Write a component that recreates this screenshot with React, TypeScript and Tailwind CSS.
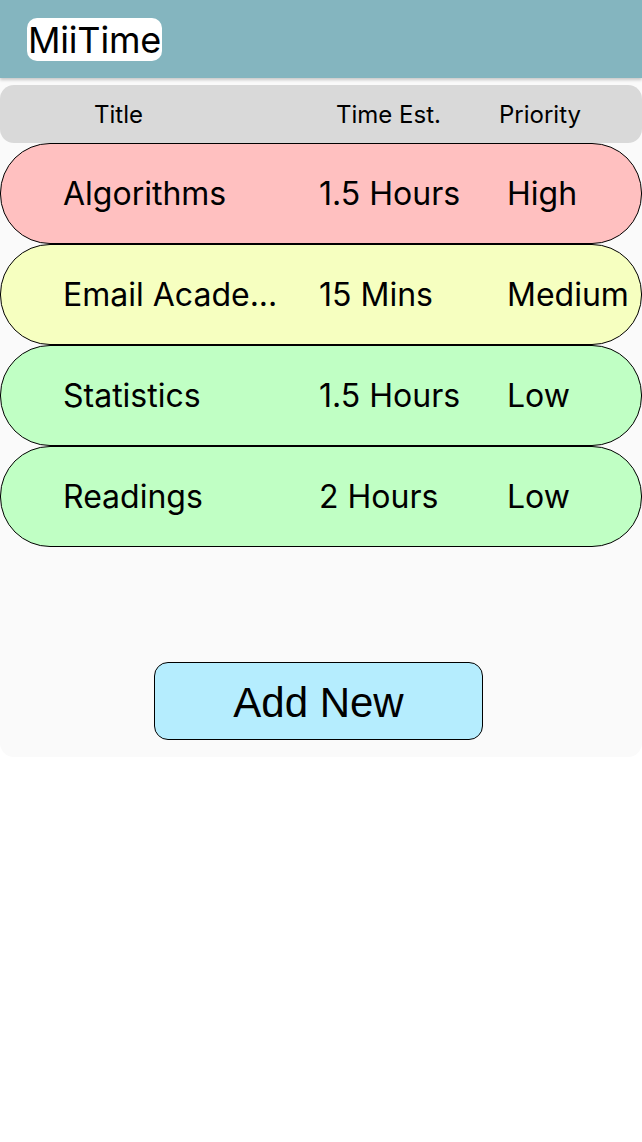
import React from "react";

const rows = [
  { title: "Algorithms", time: "1.5 Hours", priority: "High", bg: "bg-[#ffc0c0]" },
  { title: "Email Acade...", time: "15 Mins", priority: "Medium", bg: "bg-[#f6ffc0]" },
  { title: "Statistics", time: "1.5 Hours", priority: "Low", bg: "bg-[#c0ffc4]" },
  { title: "Readings", time: "2 Hours", priority: "Low", bg: "bg-[#c0ffc4]" },
];

export default function App() {
  return (
    <div className="w-[642px] min-h-[1142px] bg-white text-black font-['Inter',sans-serif]">
      <header className="h-[78px] bg-[#84b5bf] flex items-center pl-[27px] shadow-[0_2px_3px_rgba(0,0,0,0.2)] relative z-10">
        <div className="bg-white rounded-[10px] h-[43px] px-[1px] flex items-center text-[36px] leading-none tracking-[-0.2px] pt-[1px]">
          MiiTime
        </div>
      </header>
      <main className="bg-[#fafafa] rounded-b-[14px] pt-[7px] h-[679px] flex flex-col">
        <div className="h-[58px] bg-[#d9d9d9] rounded-[14px] grid grid-cols-[336px_163px_1fr] items-center text-[24px] pt-[1px]">
          <span className="pl-[94px]">Title</span>
          <span>Time Est.</span>
          <span>Priority</span>
        </div>
        <div className="flex flex-col">
          {rows.map((r) => (
            <div
              key={r.title}
              className={`h-[101px] ${r.bg} border border-black rounded-[50px] grid grid-cols-[256px_188px_1fr] items-center pl-[62px] text-[32px]`}
            >
              <span className="whitespace-nowrap">{r.title}</span>
              <span className="whitespace-nowrap">{r.time}</span>
              <span className="whitespace-nowrap">{r.priority}</span>
            </div>
          ))}
        </div>
        <div className="flex mt-[115px] pl-[154px]">
          <button className="w-[329px] h-[78px] bg-[#b5edfe] border border-black rounded-[14px] text-[42px] font-['Liberation_Sans',sans-serif] flex items-center justify-center pt-[2px]">
            Add New
          </button>
        </div>
      </main>
    </div>
  );
}
